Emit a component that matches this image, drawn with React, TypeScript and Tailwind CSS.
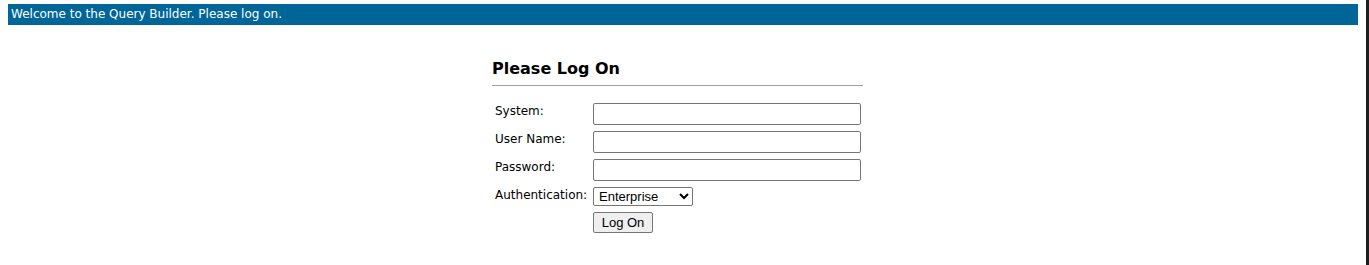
import React from "react";

const tah = { fontFamily: '"DejaVu Sans", Verdana, sans-serif' };

export default function App() {
  return (
    <div className="flex h-[265px] w-full bg-white" style={tah}>
      <div className="flex-1 flex flex-col px-2 pt-1">
        <div className="h-[21px] bg-[#006699] text-white text-[12px] leading-[21px] pl-[3px]">
          Welcome to the Query Builder. Please log on.
        </div>
        <div className="flex justify-center">
          <div className="w-[382px] pt-[34px]">
            <div className="w-[371px]">
              <h1 className="text-[16px] font-bold text-black leading-[20px] pb-[6px] border-b border-[#a0a0a0]">
                Please Log On
              </h1>
              <div className="pt-[17px] flex flex-col gap-[6px] text-[12px] text-black">
                {["System:", "User Name:", "Password:"].map((l) => (
                  <div key={l} className="flex items-start h-[22px]">
                    <div className="w-[101px] pl-[3px] pt-[1px] leading-[15px]">{l}</div>
                    <input
                      type={l === "Password:" ? "password" : "text"}
                      className="w-[268px] h-[22px] border border-[#767676] rounded-[2px] bg-white"
                    />
                  </div>
                ))}
                <div className="flex items-start h-[20px]">
                  <div className="w-[101px] pl-[3px] pt-[1px] leading-[15px]">Authentication:</div>
                  <select
                    className="w-[100px] h-[19px] border border-[#767676] rounded-[2px] bg-white text-[13px] text-black pl-[1px]"
                    style={{ fontFamily: '"Liberation Sans", Arial, sans-serif' }}
                    defaultValue="Enterprise"
                  >
                    <option>Enterprise</option>
                  </select>
                </div>
                <div className="flex h-[21px] -mt-[1px]">
                  <div className="w-[101px]" />
                  <button
                    className="w-[60px] h-[21px] border border-[#767676] rounded-[2px] bg-[#efefef] text-[13px] text-black leading-none"
                    style={{ fontFamily: '"Liberation Sans", Arial, sans-serif' }}
                  >
                    Log On
                  </button>
                </div>
              </div>
            </div>
          </div>
        </div>
      </div>
      <div className="w-[3px] bg-[#1e1e1e]" />
    </div>
  );
}
